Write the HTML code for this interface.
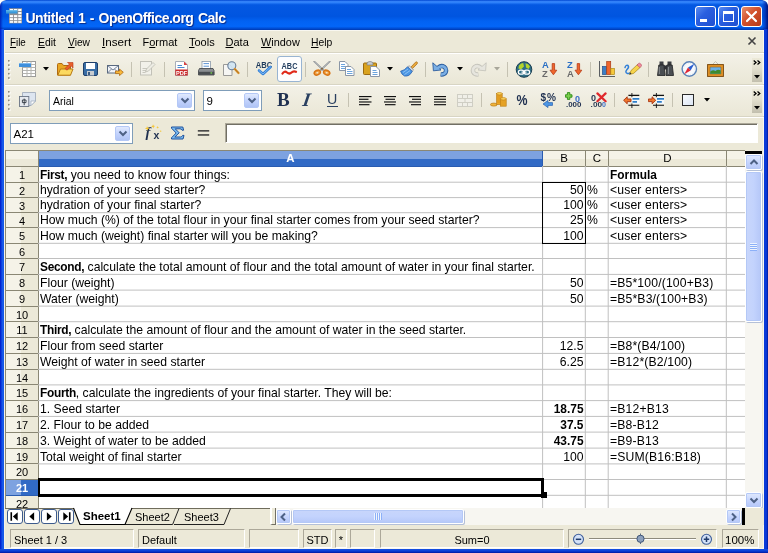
<!DOCTYPE html>
<html><head><meta charset="utf-8"><title>Untitled 1 - OpenOffice.org Calc</title>
<style>
html,body{margin:0;padding:0;background:#fff;}
#w{position:relative;width:768px;height:553px;overflow:hidden;border-radius:6px 6px 0 0;will-change:transform;background:#ECE9D8;font-family:"Liberation Sans",sans-serif;font-size:11px;color:#000;}
#w div,#w span,#w svg{position:absolute;box-sizing:border-box;}
#w b{font-weight:bold;}
.t{white-space:nowrap;line-height:1;}
.m{top:36px;font-size:11px;white-space:nowrap;line-height:13px;}
.m u{text-decoration:underline;}
.sep{width:1px;background:#C5C2B2;}
.c{font-size:12.2px;white-space:nowrap;line-height:14px;height:14px;}
.c b{font-size:11.9px;letter-spacing:-0.3px;}
.c.n b{font-size:11.9px;letter-spacing:0;}
.rh{left:6px;width:33px;font-size:11.5px;text-align:center;line-height:14px;background:#ECE9D8;border-bottom:1px solid #8A8774;border-right:1px solid #8A8774;padding-right:0px;font-size:11px;}
.hl{background:#C0C0C0;height:1px;left:38px;width:707px;}
.vl{background:#C0C0C0;width:1px;top:166px;height:342px;}
.ch{top:151px;height:16px;font-size:11.5px;text-align:center;line-height:15px;background:linear-gradient(#F5F3E8 0%,#F5F3E8 50%,#ECE9D8 50%);border-right:1px solid #8A8774;border-bottom:1px solid #8A8774;}
.st{top:529px;height:19px;border:1px solid;border-color:#ACA899 #fff #fff #ACA899;font-size:11px;line-height:20px;white-space:nowrap;}
.combo{background:#fff;border:1px solid #7F9DB9;}
.dd{background:linear-gradient(#E1EAFE,#C3D3FD 50%,#B0C4F5);border:1px solid #B4C8F6;border-radius:2px;}
.sbtn{background:linear-gradient(#E1EAFE,#C3D3FD 60%,#B5C7F8);border:1px solid #fff;border-radius:2px;box-shadow:0 0 0 1px #B4C8F6 inset,1px 1px 0 #B4C0D8;}
</style></head><body>
<div id="w">

<div style="left:0;top:0;width:768px;height:30px;background:linear-gradient(#0046D2 0%,#3C8CFF 6%,#2478F6 10%,#0458E2 16%,#0055E0 55%,#0262F2 70%,#0366F8 88%,#0050D8 94%,#0038B0 100%);border-radius:6px 6px 0 0;"></div>
<div style="left:762px;top:0;width:6px;height:30px;border-radius:0 6px 0 0;background:linear-gradient(90deg,rgba(0,20,140,0) 0%,rgba(0,20,140,0.55) 60%,rgba(0,10,110,0.9) 100%);"></div>
<div style="left:0;top:0;width:3px;height:30px;border-radius:6px 0 0 0;background:linear-gradient(90deg,rgba(0,20,170,0.8) 0%,rgba(0,20,170,0) 100%);"></div>
<div class="t" style="left:25.5px;top:11px;font-size:14px;font-weight:bold;color:#fff;text-shadow:1px 1px 1px #0A2A88;letter-spacing:-0.5px;word-spacing:1.1px;" id="title">Untitled 1 - OpenOffice.org Calc</div>
<svg style="left:6px;top:8px" width="17" height="16" viewBox="0 0 17 16"><rect x="3" y="0.2" width="13" height="15.2" fill="#8E9094"/><g fill="#fff"><rect x="3.8" y="1" width="3.3" height="2"/><rect x="8" y="1" width="3.3" height="2"/><rect x="12.2" y="1" width="3.2" height="2"/><rect x="12.2" y="4" width="3.2" height="2.1"/><rect x="3.8" y="7.1" width="3.3" height="2.1"/><rect x="8" y="7.1" width="3.3" height="2.1"/><rect x="12.2" y="7.1" width="3.2" height="2.1"/><rect x="3.8" y="10.1" width="3.3" height="2.1"/><rect x="8" y="10.1" width="3.3" height="2.1"/><rect x="12.2" y="10.1" width="3.2" height="2.1"/><rect x="3.8" y="13.1" width="3.3" height="1.7"/><rect x="8" y="13.1" width="3.3" height="1.7"/><rect x="12.2" y="13.1" width="3.2" height="1.7"/></g><rect x="0" y="2.3" width="11.4" height="3.2" fill="#3A9ADC"/><rect x="0" y="2.3" width="11.4" height="1" fill="#6CC0EE"/></svg>
<div style="left:695px;top:6px;width:21px;height:21px;border:1px solid #fff;border-radius:3px;background:linear-gradient(135deg,#5A8CF0 0%,#2A5FE0 40%,#1F4FD0 100%);"></div><div style="left:700px;top:19px;width:7px;height:3px;background:#fff;"></div>
<div style="left:718px;top:6px;width:21px;height:21px;border:1px solid #fff;border-radius:3px;background:linear-gradient(135deg,#5A8CF0 0%,#2A5FE0 40%,#1F4FD0 100%);"></div><div style="left:723px;top:11px;width:11px;height:11px;border:1px solid #fff;border-top:3px solid #fff;"></div>
<div style="left:741px;top:6px;width:21px;height:21px;border:1px solid #fff;border-radius:3px;background:linear-gradient(135deg,#E8906C 0%,#D2502C 45%,#B83A18 100%);"></div><svg style="left:741px;top:6px" width="21" height="21" viewBox="0 0 21 21"><path d="M6 6L15 15M15 6L6 15" stroke="#fff" stroke-width="2.2" stroke-linecap="round"/></svg>
<div style="left:0;top:30px;width:768px;height:1px;background:#F8F7F0;"></div>
<div style="left:0;top:29px;width:4px;height:524px;background:linear-gradient(90deg,#0016C8 0,#0838DC 30%,#1A5EEC 70%,#1254E4 100%);"></div>
<div style="left:764px;top:29px;width:4px;height:524px;background:linear-gradient(90deg,#0A3CD8 0,#0838D8 60%,#00189A 100%);"></div>
<div style="left:0;top:549px;width:768px;height:4px;background:linear-gradient(#1650E0 0,#0A40D8 50%,#0018A0 100%);"></div>
<div style="left:4px;top:30px;width:1px;height:519px;background:#F4F2E8;"></div>
<div style="left:763px;top:30px;width:1px;height:519px;background:#F8F7F0;"></div>
<div style="left:4px;top:548px;width:760px;height:1px;background:#F8F7F0;"></div>
<div class="m" style="left:10px;transform:scaleX(0.89);transform-origin:0 0;"><u>F</u>ile</div>
<div class="m" style="left:38px;transform:scaleX(0.94);transform-origin:0 0;"><u>E</u>dit</div>
<div class="m" style="left:68px;transform:scaleX(0.93);transform-origin:0 0;"><u>V</u>iew</div>
<div class="m" style="left:102px;transform:scaleX(1.06);transform-origin:0 0;"><u>I</u>nsert</div>
<div class="m" style="left:142.5px;transform:scaleX(1);transform-origin:0 0;">F<u>o</u>rmat</div>
<div class="m" style="left:189px;transform:scaleX(1);transform-origin:0 0;"><u>T</u>ools</div>
<div class="m" style="left:225.5px;transform:scaleX(1);transform-origin:0 0;"><u>D</u>ata</div>
<div class="m" style="left:260.5px;transform:scaleX(0.99);transform-origin:0 0;"><u>W</u>indow</div>
<div class="m" style="left:310.5px;transform:scaleX(0.94);transform-origin:0 0;"><u>H</u>elp</div>
<svg style="left:747px;top:36px" width="10" height="10" viewBox="0 0 10 10"><path d="M1.5 1.5L8.5 8.5M8.5 1.5L1.5 8.5" stroke="#444" stroke-width="1.6"/></svg>
<div style="left:5px;top:53px;width:759px;height:1px;background:#fff;"></div>
<div style="left:5px;top:52px;width:759px;height:1px;background:#D8D5C4;"></div>
<div style="left:5px;top:84px;width:759px;height:1px;background:#D8D5C4;"></div>
<div style="left:5px;top:85px;width:759px;height:1px;background:#fff;"></div>
<div style="left:5px;top:116px;width:759px;height:1px;background:#D8D5C4;"></div>
<div style="left:5px;top:117px;width:759px;height:1px;background:#fff;"></div>
<div style="left:5px;top:54px;width:758px;height:30px;background:linear-gradient(#F3F1E7,#EAE7D6);"></div>
<div style="left:5px;top:86px;width:758px;height:30px;background:linear-gradient(#F3F1E7,#EAE7D6);"></div>
<svg style="left:8px;top:60px" width="4" height="23.5" viewBox="0 0 4 23.5"><rect x="1" y="1" width="1.6" height="1.6" fill="#fff"/><rect x="0" y="0" width="1.6" height="1.6" fill="#8D8A7C"/><rect x="1" y="5.3" width="1.6" height="1.6" fill="#fff"/><rect x="0" y="4.3" width="1.6" height="1.6" fill="#8D8A7C"/><rect x="1" y="9.6" width="1.6" height="1.6" fill="#fff"/><rect x="0" y="8.6" width="1.6" height="1.6" fill="#8D8A7C"/><rect x="1" y="13.9" width="1.6" height="1.6" fill="#fff"/><rect x="0" y="12.9" width="1.6" height="1.6" fill="#8D8A7C"/><rect x="1" y="18.2" width="1.6" height="1.6" fill="#fff"/><rect x="0" y="17.2" width="1.6" height="1.6" fill="#8D8A7C"/></svg>
<svg style="left:19px;top:61px" width="17" height="16" viewBox="0 0 17 16"><rect x="3.5" y="0.5" width="13" height="15" fill="#fff" stroke="#9A9A98"/><path d="M3.5 3.5h13M3.5 6.5h13M3.5 9.5h13M3.5 12.5h13M8 0.5v15M12 0.5v15" stroke="#B4B4B0"/><rect x="0" y="2" width="12" height="4" fill="#3F8FDC"/><rect x="0" y="2" width="12" height="1" fill="#7DB8EE"/></svg>
<svg style="left:43px;top:67px" width="6" height="4" viewBox="0 0 6 4"><path d="M0 0H6L3 3.5z" fill="#000"/></svg>
<svg style="left:57px;top:61px" width="17" height="15" viewBox="0 0 17 15"><path d="M0.5 14V3.5Q0.5 2.5 1.5 2.5H5L6.5 4.5H13.5V14z" fill="#E9A824" stroke="#B06A10"/><path d="M0.8 14.2L3.5 8H16L13.5 14.2z" fill="#FBD960" stroke="#B97A14"/><path d="M8 7.5L12.5 3L10.5 1.5H16V7L14.3 5L10 9.2z" fill="#E8602C" stroke="#B8381A" stroke-width="0.6"/></svg>
<svg style="left:83px;top:62px" width="15" height="14" viewBox="0 0 15 14"><rect x="0.5" y="0.5" width="14" height="13" rx="1.5" fill="#3A6EA5" stroke="#1F3F6A"/><rect x="3" y="1" width="9" height="6" fill="#fff"/><rect x="4" y="9" width="7" height="4.5" fill="#C8CCD0"/><rect x="5" y="10" width="2" height="3" fill="#3A5A80"/></svg>
<svg style="left:107px;top:65px" width="17" height="11" viewBox="0 0 17 11"><rect x="0.5" y="0.5" width="11" height="7.5" fill="#F4F6FA" stroke="#5A6A80"/><path d="M0.5 0.5L6 5L11.5 0.5M0.5 8L4.5 4M11.5 8L7.5 4" stroke="#5A6A80" fill="none" stroke-width="0.8"/><path d="M8.5 6H12.5V4L16.3 7.3L12.5 10.6V8.6H8.5z" fill="#F8B83C" stroke="#B06A10" stroke-width="0.8"/></svg>
<div class="sep" style="left:131px;top:62px;height:15px;"></div>
<svg style="left:140px;top:61px" width="16" height="15" viewBox="0 0 16 15"><rect x="0.5" y="0.5" width="11" height="13.5" fill="#F2F1EA" stroke="#C2C1B8"/><path d="M2.5 7.5h5M2.5 9.5h4M2.5 11.5h3" stroke="#C8C7BE"/><path d="M5.5 11L6.5 8L13 1.5L15 3.5L8.5 10z" fill="#EDECE4" stroke="#BDBCB2" stroke-width="0.8"/></svg>
<div class="sep" style="left:164px;top:62px;height:15px;"></div>
<svg style="left:175px;top:61px" width="13" height="15" viewBox="0 0 13 15"><path d="M0.5 0.5H9L12.5 4V14.5H0.5z" fill="#fff" stroke="#A8AEB8"/><path d="M9 0.5V4H12.5z" fill="#D84040"/><path d="M2.5 4.5H7M2.5 6.5H9.5" stroke="#4A88D0" stroke-width="1"/><rect x="0.3" y="8.5" width="12.4" height="6" fill="#CC2B2B"/><text x="6.5" y="13.6" font-family="Liberation Sans,sans-serif" font-weight="bold" font-size="5.6" fill="#fff" text-anchor="middle">PDF</text></svg>
<svg style="left:198px;top:61px" width="17" height="15" viewBox="0 0 17 15"><rect x="4" y="0.5" width="8.5" height="8" fill="#fff" stroke="#8A98AA" stroke-width="0.8"/><path d="M5.5 2.6h5.5M5.5 5.2h5.5" stroke="#4A88D0" stroke-width="0.9"/><path d="M1.5 7.5h13.5l1 2v4.5h-15.5v-4.5z" fill="#8A8E92" stroke="#3A3E42" stroke-width="0.8"/><rect x="0.7" y="10.8" width="15.6" height="3" fill="#4A4E52"/><rect x="12.5" y="11.3" width="1.6" height="1.3" fill="#7ADC50"/></svg>
<svg style="left:223px;top:61px" width="17" height="15" viewBox="0 0 17 15"><path d="M0.5 3.5H6.5L9 6V14.5H0.5z" fill="#F6F6F4" stroke="#9A9A98"/><circle cx="8.8" cy="4.8" r="4" fill="#CFE4F4" fill-opacity="0.9" stroke="#6A7E96" stroke-width="1.1"/><path d="M11.8 8L15.5 12" stroke="#D8902C" stroke-width="2.2" stroke-linecap="round"/><path d="M11.8 8L15.5 12" stroke="#8A5A14" stroke-width="0.5"/></svg>
<div class="sep" style="left:247px;top:62px;height:15px;"></div>
<svg style="left:255px;top:60px" width="18" height="17" viewBox="0 0 18 17"><text x="9" y="7.8" font-family="Liberation Sans,sans-serif" font-weight="bold" font-size="9.6" fill="#1E3A5C" text-anchor="middle" textLength="16.4" lengthAdjust="spacingAndGlyphs">ABC</text><path d="M4 10.5L8 14L15.5 7" stroke="#2F7FD8" stroke-width="2.6" fill="none" stroke-linecap="round" stroke-linejoin="round"/><path d="M4 10.5L8 14L15.5 7" stroke="#8CC0F4" stroke-width="0.9" fill="none" stroke-linecap="round" stroke-linejoin="round"/></svg>
<div style="left:277px;top:56px;width:25px;height:26px;background:#FDFDFE;border:1px solid #98B4D2;border-radius:3px;"></div>
<svg style="left:281px;top:61px" width="17" height="15" viewBox="0 0 17 15"><text x="8.5" y="7.8" font-family="Liberation Sans,sans-serif" font-weight="bold" font-size="9.2" fill="#1E3A5C" text-anchor="middle" textLength="15.8" lengthAdjust="spacingAndGlyphs">ABC</text><path d="M1.5 12.5Q3.5 9.5 6 11.5T10.5 11.5T15 10.8" stroke="#E02818" stroke-width="2.2" fill="none" stroke-linecap="round"/></svg>
<div class="sep" style="left:305px;top:62px;height:15px;"></div>
<svg style="left:313px;top:61px" width="18" height="15" viewBox="0 0 18 15"><path d="M1.2 0.5L11.6 10.4M16.8 0.5L6.4 10.4" stroke="#8A8E92" stroke-width="1.7" stroke-linecap="round"/><path d="M1.2 0.5L11.6 10.4M16.8 0.5L6.4 10.4" stroke="#D8DCE0" stroke-width="0.5"/><ellipse cx="4.3" cy="11.6" rx="3.2" ry="2.3" transform="rotate(-25 4.3 11.6)" fill="#F0A040" stroke="#D87414" stroke-width="1.5"/><ellipse cx="13.7" cy="11.6" rx="3.2" ry="2.3" transform="rotate(25 13.7 11.6)" fill="#F0A040" stroke="#D87414" stroke-width="1.5"/><ellipse cx="4.3" cy="11.7" rx="1.1" ry="0.8" fill="#F4E8D0"/><ellipse cx="13.7" cy="11.7" rx="1.1" ry="0.8" fill="#F4E8D0"/><circle cx="9" cy="7.8" r="0.9" fill="#6A4A1A"/></svg>
<svg style="left:339px;top:61px" width="16" height="15" viewBox="0 0 16 15"><path d="M0.5 0.5H6L9 3.5V9.5H0.5z" fill="#fff" stroke="#8A96A6"/><path d="M2 3.5h4M2 5.5h5.5M2 7.5h5.5" stroke="#5A98D8" stroke-width="0.9"/><path d="M6.5 5.5H12L15 8.5V14.5H6.5z" fill="#fff" stroke="#8A96A6"/><path d="M8 8.5h4M8 10.5h5.5M8 12.5h5.5" stroke="#5A98D8" stroke-width="0.9"/></svg>
<svg style="left:363px;top:61px" width="17" height="16" viewBox="0 0 17 16"><rect x="0.5" y="2" width="13" height="11.5" rx="1" fill="#D9A21E" stroke="#9A6A10"/><path d="M4 2.8Q4 0.5 7 0.5T10 2.8V4H4z" fill="#C8CCD0" stroke="#7A8088" stroke-width="0.7"/><path d="M7.5 5.5H13L16.5 9V15.5H7.5z" fill="#fff" stroke="#8A96A6"/><path d="M9.5 9.5h4M9.5 11.5h5M9.5 13.5h5" stroke="#5A98D8" stroke-width="0.9"/></svg>
<svg style="left:387px;top:67px" width="6" height="4" viewBox="0 0 6 4"><path d="M0 0H6L3 3.5z" fill="#000"/></svg>
<svg style="left:400px;top:61px" width="18" height="16" viewBox="0 0 18 16"><path d="M11 6L15.5 1.2Q16.5 0.4 17.2 1.2T17 3L12.6 7.5z" fill="#E8A83C" stroke="#A86A14" stroke-width="0.7"/><path d="M9.2 4.6L13.6 9L12 10.4L7.8 6z" fill="#D8DCE2" stroke="#7A8088" stroke-width="0.6"/><path d="M7.6 5.8L12.2 10.4Q9.5 15.8 4.5 15Q1.5 13.5 0.6 10.2Q4.5 9.5 7.6 5.8z" fill="#4C96E4" stroke="#2A62B0" stroke-width="0.8"/><path d="M3 11.5L8 8M4.5 13.5L10 9.6" stroke="#9CCBF6" stroke-width="0.8"/></svg>
<div class="sep" style="left:425px;top:62px;height:15px;"></div>
<svg style="left:432px;top:61.5px" width="18" height="15" viewBox="0 0 18 15"><path d="M6.2 5.6Q9.2 3 12.2 4.8Q15 7 13.6 10.4Q12.2 12.8 8.6 12.4" stroke="#2C5E9E" stroke-width="4.4" fill="none"/><path d="M0.8 0.8L1.4 8.8L9 8z" fill="#7AAEE4" stroke="#2C5E9E" stroke-width="0.9" stroke-linejoin="round"/><path d="M5.2 6.4Q9.2 3 12.2 4.8Q15 7 13.6 10.4Q12.2 12.8 9 12.4" stroke="#7AAEE4" stroke-width="2.6" fill="none"/></svg>
<svg style="left:457px;top:67px" width="6" height="4" viewBox="0 0 6 4"><path d="M0 0H6L3 3.5z" fill="#000"/></svg>
<svg style="left:469px;top:61.5px" width="18" height="15" viewBox="0 0 18 15"><path d="M11.8 5.6Q8.8 3 5.8 4.8Q3 7 4.4 10.4Q5.8 12.8 9.4 12.4" stroke="#C6C5BC" stroke-width="4.4" fill="none"/><path d="M17.2 0.8L16.6 8.8L9 8z" fill="#E6E5DE" stroke="#C6C5BC" stroke-width="0.9" stroke-linejoin="round"/><path d="M12.8 6.4Q8.8 3 5.8 4.8Q3 7 4.4 10.4Q5.8 12.8 9 12.4" stroke="#E6E5DE" stroke-width="2.6" fill="none"/></svg>
<svg style="left:494px;top:67px" width="6" height="4" viewBox="0 0 6 4"><path d="M0 0H6L3 3.5z" fill="#A8A69A"/></svg>
<div class="sep" style="left:507px;top:62px;height:15px;"></div>
<svg style="left:515px;top:60.5px" width="18" height="17" viewBox="0 0 18 17"><circle cx="9" cy="8.5" r="7.8" fill="#2E6E86" stroke="#1C3E50" stroke-width="1"/><path d="M4 4.5Q6 1.8 8.2 2L9 5.5L6.2 8.2L3.4 7.6zM10.5 2.2Q13.5 2.6 15 5.5L13.5 8L11 6.6z" fill="#B4D42C"/><rect x="3.4" y="9.2" width="5.4" height="4" rx="2" fill="none" stroke="#fff" stroke-width="1.3"/><rect x="9.2" y="9.2" width="5.4" height="4" rx="2" fill="none" stroke="#fff" stroke-width="1.3"/><path d="M6.5 11.2h5" stroke="#fff" stroke-width="1.3"/></svg>
<svg style="left:541.5px;top:61px" width="16" height="16" viewBox="0 0 16 16"><text x="0" y="6.8" font-family="Liberation Sans,sans-serif" font-weight="bold" font-size="9.4" fill="#2A6FC4">A</text><text x="0" y="15.6" font-family="Liberation Sans,sans-serif" font-weight="bold" font-size="9.4" fill="#6A6A6A">Z</text><path d="M10.2 2.6h2.4v6.6h2.2L11.4 13.8L8 9.2h2.2z" fill="#F0662C" stroke="#B83A14" stroke-width="0.8"/></svg>
<svg style="left:567px;top:61px" width="16" height="16" viewBox="0 0 16 16"><text x="0" y="6.8" font-family="Liberation Sans,sans-serif" font-weight="bold" font-size="9.4" fill="#2A6FC4">Z</text><text x="0" y="15.6" font-family="Liberation Sans,sans-serif" font-weight="bold" font-size="9.4" fill="#6A6A6A">A</text><path d="M10.2 2.6h2.4v6.6h2.2L11.4 13.8L8 9.2h2.2z" fill="#F0662C" stroke="#B83A14" stroke-width="0.8"/></svg>
<div class="sep" style="left:590px;top:62px;height:15px;"></div>
<svg style="left:599px;top:61px" width="17" height="16" viewBox="0 0 17 16"><path d="M0.5 0V15.5H16" stroke="#5A5E62" fill="none"/><rect x="3.5" y="5.5" width="4" height="8" fill="#3E7EC4" stroke="#1E4E8A" stroke-width="0.7"/><rect x="7.7" y="0.6" width="4" height="12.9" fill="#F0662C" stroke="#A83A14" stroke-width="0.7"/><rect x="11.8" y="7.5" width="3.6" height="6" fill="#F6C83C" stroke="#B08A14" stroke-width="0.7"/></svg>
<svg style="left:624px;top:62px" width="18" height="14" viewBox="0 0 18 14"><path d="M1 5.5Q2 2.5 4 3.5Q5.5 5 3 7.5Q0.5 10.5 3.5 11.5Q5 11.6 6 10.8" stroke="#2F7FD8" stroke-width="1.5" fill="none" stroke-linecap="round"/><path d="M5.5 12.5L7 8.6L13.6 2.4L16.4 5.2L9.6 11.4z" fill="#F6D44C" stroke="#A8841C" stroke-width="0.7"/><path d="M13 3L14.6 1.4Q15.6 0.8 16.6 1.8T17.6 3.8L16 5.6z" fill="#F08CA0" stroke="#B84A5E" stroke-width="0.6"/><path d="M5.5 12.5L6.2 10.6L7.6 11.8z" fill="#333"/></svg>
<div class="sep" style="left:648px;top:62px;height:15px;"></div>
<svg style="left:657px;top:61px" width="17" height="15" viewBox="0 0 17 15"><rect x="2.5" y="0.5" width="4" height="4" fill="#3A3C40"/><rect x="10.5" y="0.5" width="4" height="4" fill="#3A3C40"/><path d="M1.8 4H7.2L8 14.5H0.5z" fill="#4A4E52" stroke="#1E2022" stroke-width="0.8"/><path d="M9.8 4H15.2L16.5 14.5H9z" fill="#4A4E52" stroke="#1E2022" stroke-width="0.8"/><rect x="6.8" y="4.5" width="3.4" height="4" fill="#2E3034"/><path d="M2.3 6v7M11.4 6v7" stroke="#8A8E92" stroke-width="1"/></svg>
<svg style="left:681px;top:60.5px" width="17" height="17" viewBox="0 0 17 17"><circle cx="8.3" cy="8" r="7.2" fill="#F8FAFC" stroke="#5A82B8" stroke-width="1.4"/><circle cx="8.3" cy="8" r="5.6" fill="none" stroke="#C8D4E4" stroke-width="0.6" stroke-dasharray="0.8 1.4"/><path d="M13.4 2.8L9.6 9.4L7 6.6z" fill="#2A5FD0"/><path d="M3.2 13.2L7 6.6L9.6 9.4z" fill="#E02838"/></svg>
<svg style="left:707px;top:60px" width="17" height="17" viewBox="0 0 17 17"><path d="M5.5 4.5L8.5 1.5L11.5 4.5" stroke="#B8B6AA" fill="none" stroke-width="0.8"/><rect x="0.6" y="4.6" width="15.8" height="11.8" fill="#E8982A" stroke="#7A4A10" stroke-width="1"/><rect x="3" y="7" width="11" height="7" fill="#6AB0E8" stroke="#8A5A14" stroke-width="0.6"/><path d="M3.3 11.5Q6 9.5 8.5 11Q11 9 13.7 10.5V13.7H3.3z" fill="#3E8A2E"/></svg>
<div style="left:752px;top:58px;width:10px;height:24px;background:linear-gradient(#ECE9D8 0%,#E4E1D0 40%,#C2BFAE 100%);"></div>
<svg style="left:753px;top:59.5px" width="8" height="5" viewBox="0 0 8 5"><path d="M0.7 0.5L3 2.5L0.7 4.5M4.5 0.5L6.8 2.5L4.5 4.5" stroke="#000" stroke-width="1.3" fill="none"/></svg>
<svg style="left:754px;top:75px" width="6" height="4" viewBox="0 0 6 4"><path d="M0 0H6L3 3.5z" fill="#000"/></svg>
<svg style="left:8px;top:91px" width="4" height="23.5" viewBox="0 0 4 23.5"><rect x="1" y="1" width="1.6" height="1.6" fill="#fff"/><rect x="0" y="0" width="1.6" height="1.6" fill="#8D8A7C"/><rect x="1" y="5.3" width="1.6" height="1.6" fill="#fff"/><rect x="0" y="4.3" width="1.6" height="1.6" fill="#8D8A7C"/><rect x="1" y="9.6" width="1.6" height="1.6" fill="#fff"/><rect x="0" y="8.6" width="1.6" height="1.6" fill="#8D8A7C"/><rect x="1" y="13.9" width="1.6" height="1.6" fill="#fff"/><rect x="0" y="12.9" width="1.6" height="1.6" fill="#8D8A7C"/><rect x="1" y="18.2" width="1.6" height="1.6" fill="#fff"/><rect x="0" y="17.2" width="1.6" height="1.6" fill="#8D8A7C"/></svg>
<svg style="left:19px;top:92px" width="18" height="15" viewBox="0 0 18 15"><path d="M3.5 0.5H16.5V9L12 13.5H3.5z" fill="#DDE5F0" stroke="#9AA6B8" stroke-width="0.8"/><path d="M16.5 9H12V13.5z" fill="#fff" stroke="#9AA6B8" stroke-width="0.7"/><rect x="0.5" y="4.5" width="9.3" height="10" fill="#E6E9EE" stroke="#6A7484" stroke-width="0.9"/><path d="M5.2 6.6v6.6M3.4 8h3.6v2.6H3.4z" stroke="#2E3640" stroke-width="0.9" fill="#fff"/></svg>
<div class="combo" style="left:49px;top:90px;width:146px;height:21px;"></div>
<div class="t" style="left:53px;top:96px;font-size:11.5px;transform:scaleX(0.91);transform-origin:0 0;" id="fn">Arial</div>
<div class="dd" style="left:177px;top:93px;width:15px;height:15px;"></div>
<svg style="left:179.5px;top:97px" width="10" height="8" viewBox="0 0 10 8"><path d="M1.5 1.5L5 5L8.5 1.5" stroke="#4D6185" stroke-width="2" fill="none"/></svg>
<div class="combo" style="left:203px;top:90px;width:59px;height:21px;"></div>
<div class="t" style="left:206.5px;top:96px;font-size:11.5px;">9</div>
<div class="dd" style="left:244px;top:93px;width:15px;height:15px;"></div>
<svg style="left:246.5px;top:97px" width="10" height="8" viewBox="0 0 10 8"><path d="M1.5 1.5L5 5L8.5 1.5" stroke="#4D6185" stroke-width="2" fill="none"/></svg>
<div class="t" style="left:277px;top:89.5px;font-family:'Liberation Serif',serif;font-weight:bold;font-size:19px;color:#1F3050;">B</div>
<div class="t" style="left:303px;top:89.5px;font-family:'Liberation Serif',serif;font-style:italic;font-weight:bold;font-size:19px;color:#2A4060;transform:skewX(-9deg);">I</div>
<div class="t" style="left:327px;top:91px;font-family:'Liberation Sans',sans-serif;font-size:15px;color:#2A4060;transform:scaleX(0.95);transform-origin:0 0;">U</div>
<div style="left:327px;top:105.5px;width:11px;height:1px;background:#2A4060;"></div>
<div class="sep" style="left:348px;top:93px;height:14px;"></div>
<svg style="left:359px;top:96px" width="12.5" height="10" viewBox="0 0 12.5 10"><rect x="0" y="0" width="12.5" height="1.15" fill="#111"/><rect x="0" y="2.7" width="9.5" height="1.15" fill="#111"/><rect x="0" y="5.4" width="12.5" height="1.15" fill="#111"/><rect x="0" y="8.1" width="10.5" height="1.15" fill="#111"/></svg>
<svg style="left:383.8px;top:96px" width="12.5" height="10" viewBox="0 0 12.5 10"><rect x="0" y="0" width="12.5" height="1.15" fill="#111"/><rect x="1.5" y="2.7" width="9.5" height="1.15" fill="#111"/><rect x="0" y="5.4" width="12.5" height="1.15" fill="#111"/><rect x="1" y="8.1" width="10.5" height="1.15" fill="#111"/></svg>
<svg style="left:408.5px;top:96px" width="12.5" height="10" viewBox="0 0 12.5 10"><rect x="0" y="0" width="12.5" height="1.15" fill="#111"/><rect x="3" y="2.7" width="9.5" height="1.15" fill="#111"/><rect x="0" y="5.4" width="12.5" height="1.15" fill="#111"/><rect x="2" y="8.1" width="10.5" height="1.15" fill="#111"/></svg>
<svg style="left:433.8px;top:96px" width="12.5" height="10" viewBox="0 0 12.5 10"><rect x="0" y="0" width="12.5" height="1.15" fill="#111"/><rect x="0" y="2.7" width="12.5" height="1.15" fill="#111"/><rect x="0" y="5.4" width="12.5" height="1.15" fill="#111"/><rect x="0" y="8.1" width="12.5" height="1.15" fill="#111"/></svg>
<svg style="left:457px;top:94px" width="16" height="13" viewBox="0 0 16 13"><rect x="0.5" y="0.5" width="15" height="12" fill="#F0EFE8" stroke="#CFCEC4"/><path d="M0.5 4.5h15M0.5 8.5h15M5.5 0.5v4M10.5 0.5v4M5.5 8.5v4M10.5 8.5v4M8 4.5v4" stroke="#CFCEC4"/></svg>
<div class="sep" style="left:481px;top:93px;height:14px;"></div>
<svg style="left:490px;top:92px" width="17" height="15" viewBox="0 0 17 15"><ellipse cx="3.8" cy="12.6" rx="3.4" ry="1.5" fill="#F0B43C" stroke="#B87A14" stroke-width="0.7"/><rect x="6.6" y="1.5" width="5.6" height="11" fill="#EFA724" stroke="#B87A14" stroke-width="0.6"/><ellipse cx="9.4" cy="1.7" rx="2.8" ry="1.2" fill="#FAD25C" stroke="#B87A14" stroke-width="0.6"/><path d="M6.6 4h5.6M6.6 6h5.6M6.6 8h5.6M6.6 10h5.6" stroke="#C8861A" stroke-width="0.6"/><rect x="10.4" y="6.8" width="5.8" height="7.4" fill="#F2AE2C" stroke="#B87A14" stroke-width="0.6"/><ellipse cx="13.3" cy="6.8" rx="2.9" ry="1.2" fill="#FAD25C" stroke="#B87A14" stroke-width="0.6"/><path d="M10.4 9h5.8M10.4 11h5.8M10.4 13h5.8" stroke="#C8861A" stroke-width="0.6"/></svg>
<svg style="left:516px;top:93px" width="13" height="14" viewBox="0 0 13 14"><text x="0.6" y="12" font-family="Liberation Sans,sans-serif" font-weight="bold" font-size="14" fill="#1F3050" textLength="11" lengthAdjust="spacingAndGlyphs">%</text></svg>
<svg style="left:540px;top:91.5px" width="17" height="16" viewBox="0 0 17 16"><text x="0.5" y="8.6" font-family="Liberation Sans,sans-serif" font-weight="bold" font-size="10.6" fill="#1F3050" textLength="5.6" lengthAdjust="spacingAndGlyphs">$</text><text x="7" y="8.6" font-family="Liberation Sans,sans-serif" font-weight="bold" font-size="10.6" fill="#1F3050" textLength="9" lengthAdjust="spacingAndGlyphs">%</text><path d="M12.5 10.6H8V8.4L3 12L8 15.6V13.4H12.5z" fill="#4C96E4" stroke="#2A62B0" stroke-width="0.7"/></svg>
<svg style="left:564.5px;top:91.5px" width="17" height="16" viewBox="0 0 17 16"><path d="M2.4 0.6h2.4v2.2h2.2v2.4H4.8v2.2H2.4V5.2H0.4V2.8h2z" fill="#7CD04C" stroke="#2A8A14" stroke-width="0.9"/><text x="10" y="9.8" font-family="Liberation Sans,sans-serif" font-weight="bold" font-size="9" fill="#3A6EC8">0</text><text x="1" y="15.4" font-family="Liberation Sans,sans-serif" font-weight="bold" font-size="7" fill="#1F3050" textLength="15.4" lengthAdjust="spacingAndGlyphs">.000</text></svg>
<svg style="left:589.5px;top:91.5px" width="17" height="16" viewBox="0 0 17 16"><text x="1" y="8.6" font-family="Liberation Sans,sans-serif" font-weight="bold" font-size="9" fill="#2A3A54">0</text><path d="M7.4 1.4L15.6 9.2M15.6 1.4L7.4 9.2" stroke="#E0282C" stroke-width="2.2" stroke-linecap="round"/><text x="0.6" y="15.4" font-family="Liberation Sans,sans-serif" font-weight="bold" font-size="7" fill="#2A3A54" textLength="11.5" lengthAdjust="spacingAndGlyphs">.00</text><text x="12" y="15.4" font-family="Liberation Sans,sans-serif" font-weight="bold" font-size="7" fill="#3A6EC8">0</text></svg>
<div class="sep" style="left:614px;top:93px;height:14px;"></div>
<svg style="left:622.5px;top:93px" width="17" height="15" viewBox="0 0 17 15"><rect x="9" y="4" width="7.6" height="7" fill="#F4F8FC"/><path d="M5.4 2.4H16.3M5.4 12.3H16.3" stroke="#111" stroke-width="1.1"/><path d="M8.9 0V4.2M8.9 10.5V15" stroke="#111" stroke-width="0.9"/><path d="M9.5 5.8H16.3M9.5 8.9H14" stroke="#2F7FC8" stroke-width="1.7"/><path d="M0.6 7.3L4.2 3.8V6H8v2.6H4.2v2.2z" fill="#F0762C" stroke="#A8320E" stroke-width="0.9" stroke-linejoin="round"/></svg>
<svg style="left:648px;top:93px" width="17" height="15" viewBox="0 0 17 15"><rect x="8.6" y="4" width="7.6" height="7" fill="#F4F8FC"/><path d="M5 2.4H16M5 12.3H16" stroke="#111" stroke-width="1.1"/><path d="M8.4 0V4.2M8.4 10.5V15" stroke="#111" stroke-width="0.9"/><path d="M9 5.8H16M9 8.9H13.8" stroke="#2F7FC8" stroke-width="1.7"/><path d="M7.7 7.3L4.1 3.8V6H0.4v2.6H4.1v2.2z" fill="#F0762C" stroke="#A8320E" stroke-width="0.9" stroke-linejoin="round"/></svg>
<div class="sep" style="left:672px;top:93px;height:14px;"></div>
<div style="left:682px;top:94px;width:12px;height:12px;border:1px solid #2A2A2A;background:linear-gradient(135deg,#F8FAFE,#DCE6F4);"></div>
<svg style="left:704px;top:98px" width="6" height="4" viewBox="0 0 6 4"><path d="M0 0H6L3 3.5z" fill="#000"/></svg>
<div style="left:752px;top:89px;width:10px;height:24px;background:linear-gradient(#ECE9D8 0%,#E4E1D0 40%,#C2BFAE 100%);"></div>
<svg style="left:753px;top:90.5px" width="8" height="5" viewBox="0 0 8 5"><path d="M0.7 0.5L3 2.5L0.7 4.5M4.5 0.5L6.8 2.5L4.5 4.5" stroke="#000" stroke-width="1.3" fill="none"/></svg>
<svg style="left:754px;top:106px" width="6" height="4" viewBox="0 0 6 4"><path d="M0 0H6L3 3.5z" fill="#000"/></svg>
<div class="combo" style="left:10px;top:123px;width:123px;height:21px;"></div>
<div class="t" style="left:13.5px;top:129px;font-size:11.5px;">A21</div>
<div class="dd" style="left:115px;top:126px;width:15px;height:15px;"></div>
<svg style="left:117.5px;top:130px" width="10" height="8" viewBox="0 0 10 8"><path d="M1.5 1.5L5 5L8.5 1.5" stroke="#4D6185" stroke-width="2" fill="none"/></svg>
<div style="left:225px;top:123px;width:533px;height:20px;background:#fff;border:1px solid #ACA899;border-right-color:#fff;border-bottom-color:#fff;box-shadow:inset 1px 1px 0 #716F64;"></div>
<svg style="left:144px;top:124px" width="18" height="18" viewBox="0 0 18 18"><text x="1.6" y="13.2" font-family="Liberation Serif,serif" font-style="italic" font-weight="bold" font-size="14.5" fill="#1F3050">f</text><text x="9.6" y="14.8" font-family="Liberation Sans,sans-serif" font-weight="bold" font-size="10.5" fill="#1F3050">x</text><path d="M3 2l.9 1.8l1.9.4l-1.8.8l-.5 1.9l-.8-1.8l-1.9-.5l1.8-.8zM9 0.3l.7 1.5l1.6.3l-1.5.7l-.4 1.6l-.7-1.5l-1.6-.4l1.5-.7zM13.5 2l.5 1l1.1.2l-1 .5l-.3 1.1l-.5-1l-1.1-.3l1-.5zM16.5 6l.4.8l.9.2l-.8.4l-.2.9l-.4-.8l-.9-.2l.8-.4z" fill="#F4C430"/></svg>
<svg style="left:170px;top:126px" width="15" height="14" viewBox="0 0 15 14"><path d="M1.5 1H12.8L13.6 4.2H12Q11.6 2.8 10 2.8H5.2L9.2 6.8L4.8 11H10.4Q12 11 12.6 9.4H14L13 13H1.5V11.8L6.2 7L1.5 2.2z" fill="#7CC0F4" stroke="#1E4E9A" stroke-width="1" stroke-linejoin="round"/></svg>
<svg style="left:197px;top:129px" width="13" height="8" viewBox="0 0 13 8"><rect x="0.8" y="1.1" width="11.4" height="1.5" fill="#3A3A3A"/><rect x="0.8" y="5.2" width="11.4" height="1.5" fill="#3A3A3A"/></svg>
<div style="left:5px;top:150px;width:740px;height:358px;background:#fff;"></div>
<div style="left:5px;top:150px;width:740px;height:1px;background:#8A8774;"></div>
<div style="left:5px;top:150px;width:1px;height:358px;background:#8A8774;"></div>
<div class="ch" style="left:6px;width:33px;"></div>
<div class="ch" style="left:39px;width:504px;background:linear-gradient(#7DA2E0 0%,#7DA2E0 50%,#316AC5 50%,#316AC5 100%);color:#fff;font-weight:bold;border-color:#2A5CB0;">A</div>
<div class="ch" style="left:543px;width:43px;">B</div>
<div class="ch" style="left:586px;width:23px;">C</div>
<div class="ch" style="left:609px;width:118px;">D</div>
<div class="ch" style="left:727px;width:18px;border-right:0;"></div>
<div class="rh" style="top:167px;height:16px;line-height:17px;background:linear-gradient(90deg,#F5F3E8 0%,#F5F3E8 46%,#ECE9D8 46%);">1</div>
<div class="rh" style="top:183px;height:15px;line-height:16px;background:linear-gradient(90deg,#F5F3E8 0%,#F5F3E8 46%,#ECE9D8 46%);">2</div>
<div class="rh" style="top:198px;height:15px;line-height:16px;background:linear-gradient(90deg,#F5F3E8 0%,#F5F3E8 46%,#ECE9D8 46%);">3</div>
<div class="rh" style="top:213px;height:15px;line-height:16px;background:linear-gradient(90deg,#F5F3E8 0%,#F5F3E8 46%,#ECE9D8 46%);">4</div>
<div class="rh" style="top:228px;height:16px;line-height:17px;background:linear-gradient(90deg,#F5F3E8 0%,#F5F3E8 46%,#ECE9D8 46%);">5</div>
<div class="rh" style="top:244px;height:15px;line-height:16px;background:linear-gradient(90deg,#F5F3E8 0%,#F5F3E8 46%,#ECE9D8 46%);">6</div>
<div class="rh" style="top:259px;height:16px;line-height:17px;background:linear-gradient(90deg,#F5F3E8 0%,#F5F3E8 46%,#ECE9D8 46%);">7</div>
<div class="rh" style="top:275px;height:16px;line-height:17px;background:linear-gradient(90deg,#F5F3E8 0%,#F5F3E8 46%,#ECE9D8 46%);">8</div>
<div class="rh" style="top:291px;height:16px;line-height:17px;background:linear-gradient(90deg,#F5F3E8 0%,#F5F3E8 46%,#ECE9D8 46%);">9</div>
<div class="rh" style="top:307px;height:15px;line-height:16px;background:linear-gradient(90deg,#F5F3E8 0%,#F5F3E8 46%,#ECE9D8 46%);">10</div>
<div class="rh" style="top:322px;height:16px;line-height:17px;background:linear-gradient(90deg,#F5F3E8 0%,#F5F3E8 46%,#ECE9D8 46%);">11</div>
<div class="rh" style="top:338px;height:16px;line-height:17px;background:linear-gradient(90deg,#F5F3E8 0%,#F5F3E8 46%,#ECE9D8 46%);">12</div>
<div class="rh" style="top:354px;height:16px;line-height:17px;background:linear-gradient(90deg,#F5F3E8 0%,#F5F3E8 46%,#ECE9D8 46%);">13</div>
<div class="rh" style="top:370px;height:15px;line-height:16px;background:linear-gradient(90deg,#F5F3E8 0%,#F5F3E8 46%,#ECE9D8 46%);">14</div>
<div class="rh" style="top:385px;height:16px;line-height:17px;background:linear-gradient(90deg,#F5F3E8 0%,#F5F3E8 46%,#ECE9D8 46%);">15</div>
<div class="rh" style="top:401px;height:16px;line-height:17px;background:linear-gradient(90deg,#F5F3E8 0%,#F5F3E8 46%,#ECE9D8 46%);">16</div>
<div class="rh" style="top:417px;height:16px;line-height:17px;background:linear-gradient(90deg,#F5F3E8 0%,#F5F3E8 46%,#ECE9D8 46%);">17</div>
<div class="rh" style="top:433px;height:16px;line-height:17px;background:linear-gradient(90deg,#F5F3E8 0%,#F5F3E8 46%,#ECE9D8 46%);">18</div>
<div class="rh" style="top:449px;height:15px;line-height:16px;background:linear-gradient(90deg,#F5F3E8 0%,#F5F3E8 46%,#ECE9D8 46%);">19</div>
<div class="rh" style="top:464px;height:16px;line-height:17px;background:linear-gradient(90deg,#F5F3E8 0%,#F5F3E8 46%,#ECE9D8 46%);">20</div>
<div class="rh" style="top:480px;height:16px;line-height:17px;background:linear-gradient(90deg,#7DA2E0 0%,#7DA2E0 46%,#316AC5 46%,#316AC5 100%);color:#fff;font-weight:bold;border-color:#2A5CB0;">21</div>
<div class="rh" style="top:496px;height:12px;line-height:17px;background:linear-gradient(90deg,#F5F3E8 0%,#F5F3E8 46%,#ECE9D8 46%);border-bottom:0;">22</div>
<svg style="left:0;top:0" width="768" height="553" viewBox="0 0 768 553"><path d="M38 182.2H745" stroke="#C0C0C0" stroke-width="1"/><path d="M38 197.6H745" stroke="#C0C0C0" stroke-width="1"/><path d="M38 212.7H745" stroke="#C0C0C0" stroke-width="1"/><path d="M38 227.6H745" stroke="#C0C0C0" stroke-width="1"/><path d="M38 243.3H745" stroke="#C0C0C0" stroke-width="1"/><path d="M38 258.5H745" stroke="#C0C0C0" stroke-width="1"/><path d="M38 274.4H745" stroke="#C0C0C0" stroke-width="1"/><path d="M38 290.1H745" stroke="#C0C0C0" stroke-width="1"/><path d="M38 306.1H745" stroke="#C0C0C0" stroke-width="1"/><path d="M38 321.7H745" stroke="#C0C0C0" stroke-width="1"/><path d="M38 337.5H745" stroke="#C0C0C0" stroke-width="1"/><path d="M38 353.4H745" stroke="#C0C0C0" stroke-width="1"/><path d="M38 369.3H745" stroke="#C0C0C0" stroke-width="1"/><path d="M38 384.9H745" stroke="#C0C0C0" stroke-width="1"/><path d="M38 400.6H745" stroke="#C0C0C0" stroke-width="1"/><path d="M38 416.4H745" stroke="#C0C0C0" stroke-width="1"/><path d="M38 432.1H745" stroke="#C0C0C0" stroke-width="1"/><path d="M38 448.1H745" stroke="#C0C0C0" stroke-width="1"/><path d="M38 463.9H745" stroke="#C0C0C0" stroke-width="1"/><path d="M38 479.5H745" stroke="#C0C0C0" stroke-width="1"/><path d="M38 495.3H745" stroke="#C0C0C0" stroke-width="1"/><path d="M542.6 166V508" stroke="#C0C0C0" stroke-width="1"/><path d="M585.3 166V508" stroke="#C0C0C0" stroke-width="1"/><path d="M608.2 166V508" stroke="#C0C0C0" stroke-width="1"/><path d="M726.3 166V508" stroke="#C0C0C0" stroke-width="1"/></svg>
<div class="c" style="left:40px;top:0;transform:translateY(167.9px);"><b>First,</b> you need to know four things:</div>
<div class="c n" style="left:610px;letter-spacing:0.15px;top:0;transform:translateY(167.9px);"><b>Formula</b></div>
<div class="c" style="left:40px;top:0;transform:translateY(183.3px);">hydration of your seed starter?</div>
<div class="c n" style="left:543px;width:40.5px;text-align:right;top:0;transform:translateY(183.3px);">50</div>
<div class="c" style="left:587px;top:0;transform:translateY(183.3px);">%</div>
<div class="c n" style="left:610px;letter-spacing:0.15px;top:0;transform:translateY(183.3px);">&lt;user enters&gt;</div>
<div class="c" style="left:40px;top:0;transform:translateY(198.4px);">hydration of your final starter?</div>
<div class="c n" style="left:543px;width:40.5px;text-align:right;top:0;transform:translateY(198.4px);">100</div>
<div class="c" style="left:587px;top:0;transform:translateY(198.4px);">%</div>
<div class="c n" style="left:610px;letter-spacing:0.15px;top:0;transform:translateY(198.4px);">&lt;user enters&gt;</div>
<div class="c" style="left:40px;top:0;transform:translateY(213.3px);">How much (%) of the total flour in your final starter comes from your seed starter?</div>
<div class="c n" style="left:543px;width:40.5px;text-align:right;top:0;transform:translateY(213.3px);">25</div>
<div class="c" style="left:587px;top:0;transform:translateY(213.3px);">%</div>
<div class="c n" style="left:610px;letter-spacing:0.15px;top:0;transform:translateY(213.3px);">&lt;user enters&gt;</div>
<div class="c" style="left:40px;top:0;transform:translateY(229px);">How much (weight) final starter will you be making?</div>
<div class="c n" style="left:543px;width:40.5px;text-align:right;top:0;transform:translateY(229px);">100</div>
<div class="c n" style="left:610px;letter-spacing:0.15px;top:0;transform:translateY(229px);">&lt;user enters&gt;</div>
<div class="c" style="left:40px;top:0;transform:translateY(260.1px);"><b>Second,</b> calculate the total amount of flour and the total amount of water in your final starter.</div>
<div class="c" style="left:40px;top:0;transform:translateY(275.8px);">Flour (weight)</div>
<div class="c n" style="left:543px;width:40.5px;text-align:right;top:0;transform:translateY(275.8px);">50</div>
<div class="c n" style="left:610px;letter-spacing:0.15px;top:0;transform:translateY(275.8px);">=B5*100/(100+B3)</div>
<div class="c" style="left:40px;top:0;transform:translateY(291.8px);">Water (weight)</div>
<div class="c n" style="left:543px;width:40.5px;text-align:right;top:0;transform:translateY(291.8px);">50</div>
<div class="c n" style="left:610px;letter-spacing:0.15px;top:0;transform:translateY(291.8px);">=B5*B3/(100+B3)</div>
<div class="c" style="left:40px;top:0;transform:translateY(323.2px);"><b>Third,</b> calculate the amount of flour and the amount of water in the seed starter.</div>
<div class="c" style="left:40px;top:0;transform:translateY(339.1px);">Flour from seed starter</div>
<div class="c n" style="left:543px;width:40.5px;text-align:right;top:0;transform:translateY(339.1px);">12.5</div>
<div class="c n" style="left:610px;letter-spacing:0.15px;top:0;transform:translateY(339.1px);">=B8*(B4/100)</div>
<div class="c" style="left:40px;top:0;transform:translateY(355px);">Weight of water in seed starter</div>
<div class="c n" style="left:543px;width:40.5px;text-align:right;top:0;transform:translateY(355px);">6.25</div>
<div class="c n" style="left:610px;letter-spacing:0.15px;top:0;transform:translateY(355px);">=B12*(B2/100)</div>
<div class="c" style="left:40px;top:0;transform:translateY(386.3px);"><b>Fourth</b>, calculate the ingredients of your final starter. They will be:</div>
<div class="c" style="left:40px;top:0;transform:translateY(402.1px);">1. Seed starter</div>
<div class="c n" style="left:543px;width:40.5px;text-align:right;top:0;transform:translateY(402.1px);"><b>18.75</b></div>
<div class="c n" style="left:610px;letter-spacing:0.15px;top:0;transform:translateY(402.1px);">=B12+B13</div>
<div class="c" style="left:40px;top:0;transform:translateY(417.8px);">2. Flour to be added</div>
<div class="c n" style="left:543px;width:40.5px;text-align:right;top:0;transform:translateY(417.8px);"><b>37.5</b></div>
<div class="c n" style="left:610px;letter-spacing:0.15px;top:0;transform:translateY(417.8px);">=B8-B12</div>
<div class="c" style="left:40px;top:0;transform:translateY(433.8px);">3. Weight of water to be added</div>
<div class="c n" style="left:543px;width:40.5px;text-align:right;top:0;transform:translateY(433.8px);"><b>43.75</b></div>
<div class="c n" style="left:610px;letter-spacing:0.15px;top:0;transform:translateY(433.8px);">=B9-B13</div>
<div class="c" style="left:40px;top:0;transform:translateY(449.6px);">Total weight of final starter</div>
<div class="c n" style="left:543px;width:40.5px;text-align:right;top:0;transform:translateY(449.6px);">100</div>
<div class="c n" style="left:610px;letter-spacing:0.15px;top:0;transform:translateY(449.6px);">=SUM(B16:B18)</div>
<div style="left:542px;top:182px;width:44px;height:62px;border:1px solid #000;"></div>
<div style="left:38px;top:478px;width:506px;height:19px;border:3px solid #000;border-left-width:2px;"></div>
<div style="left:541px;top:492px;width:6px;height:6px;background:#000;"></div>
<div style="left:745px;top:151px;width:17px;height:357px;background:#F7F6F1;"></div>
<div style="left:745px;top:151px;width:17px;height:3px;background:#000;"></div>
<div class="sbtn" style="left:745px;top:154px;width:17px;height:16px;"></div>
<svg style="left:749px;top:158px" width="10" height="8" viewBox="0 0 10 8"><path d="M1.5 6L5 2.5L8.5 6" stroke="#4D6185" stroke-width="2" fill="none"/></svg>
<div class="sbtn" style="left:745px;top:171px;width:17px;height:151px;background:linear-gradient(90deg,#C8D6FB,#C3D3FD 50%,#B5C7F8);"></div>
<div style="left:750px;top:243px;width:7px;height:8px;background:repeating-linear-gradient(#EEF4FE 0,#EEF4FE 1px,#8CB0F8 1px,#8CB0F8 2px);"></div>
<div class="sbtn" style="left:745px;top:492px;width:17px;height:16px;"></div>
<svg style="left:749px;top:497px" width="10" height="8" viewBox="0 0 10 8"><path d="M1.5 1.5L5 5L8.5 1.5" stroke="#4D6185" stroke-width="2" fill="none"/></svg>
<div style="left:5px;top:508px;width:759px;height:17px;background:#ECE9D8;"></div>
<div style="left:7px;top:509px;width:16px;height:15px;border:1px solid #3C5A8C;border-radius:3px;background:#fff;"></div>
<svg style="left:7px;top:509px" width="16" height="15" viewBox="0 0 15 14"><path d="M4 3v8" stroke="#000" stroke-width="1.5"/><path d="M10 3L5.5 7L10 11z" fill="#000"/></svg>
<div style="left:24px;top:509px;width:16px;height:15px;border:1px solid #3C5A8C;border-radius:3px;background:#fff;"></div>
<svg style="left:24px;top:509px" width="16" height="15" viewBox="0 0 15 14"><path d="M9.5 3L5 7L9.5 11z" fill="#000"/></svg>
<div style="left:41px;top:509px;width:16px;height:15px;border:1px solid #3C5A8C;border-radius:3px;background:#fff;"></div>
<svg style="left:41px;top:509px" width="16" height="15" viewBox="0 0 15 14"><path d="M5.5 3L10 7L5.5 11z" fill="#000"/></svg>
<div style="left:58px;top:509px;width:16px;height:15px;border:1px solid #3C5A8C;border-radius:3px;background:#fff;"></div>
<svg style="left:58px;top:509px" width="16" height="15" viewBox="0 0 15 14"><path d="M11 3v8" stroke="#000" stroke-width="1.5"/><path d="M5 3L9.5 7L5 11z" fill="#000"/></svg>
<div style="left:5px;top:508px;width:266px;height:1px;background:#6F6C5C;"></div>
<svg style="left:70px;top:507px" width="210" height="18" viewBox="0 0 210 18"><path d="M55 17.5H102.6L109 1.5M104 17.5H154L160.5 1.5" fill="none" stroke="#222" stroke-width="1"/><path d="M3.5 1L10 17.5H55L62 1" fill="#fff" stroke="#000" stroke-width="1.1"/></svg>
<div class="t" style="left:83px;top:511px;font-size:11.5px;font-weight:bold;">Sheet1</div>
<div class="t" style="left:135px;top:511.5px;font-size:11px;">Sheet2</div>
<div class="t" style="left:184px;top:511.5px;font-size:11px;">Sheet3</div>
<div style="left:270px;top:508px;width:6px;height:17px;background:#ECE9D8;border-left:2px solid #fff;border-right:1px solid #716F64;border-bottom:1px solid #716F64;"></div>
<div style="left:276px;top:508px;width:466px;height:17px;background:#F7F6F1;"></div>
<div class="sbtn" style="left:276px;top:509px;width:15px;height:15px;"></div>
<svg style="left:279px;top:511.5px" width="8" height="10" viewBox="0 0 8 10"><path d="M6 1.5L2.5 5L6 8.5" stroke="#4D6185" stroke-width="2" fill="none"/></svg>
<div class="sbtn" style="left:292px;top:509px;width:172px;height:15px;background:linear-gradient(#C8D6FB,#C3D3FD 50%,#B5C7F8);"></div>
<div style="left:374px;top:513px;width:8px;height:7px;background:repeating-linear-gradient(90deg,#EEF4FE 0,#EEF4FE 1px,#8CB0F8 1px,#8CB0F8 2px);"></div>
<div class="sbtn" style="left:726px;top:509px;width:15px;height:15px;"></div>
<svg style="left:730px;top:511.5px" width="8" height="10" viewBox="0 0 8 10"><path d="M2 1.5L5.5 5L2 8.5" stroke="#4D6185" stroke-width="2" fill="none"/></svg>
<div style="left:742px;top:508px;width:3px;height:17px;background:#000;"></div>
<div class="st" style="left:10px;width:124px;padding-left:3px;">Sheet 1 / 3</div>
<div class="st" style="left:138px;width:107px;padding-left:3px;">Default</div>
<div class="st" style="left:249px;width:50px;padding-left:3px;"></div>
<div class="st" style="left:303px;width:29px;text-align:center;">STD</div>
<div class="st" style="left:335px;width:12px;text-align:center;">*</div>
<div class="st" style="left:350px;width:25px;padding-left:3px;"></div>
<div class="st" style="left:380px;width:184px;text-align:center;">Sum=0</div>
<div class="st" style="left:568px;width:149px;padding-left:3px;"></div>
<div class="st" style="left:722px;width:37px;padding-left:2px;font-size:11.5px;">100%</div>
<svg style="left:568px;top:529px" width="149" height="19" viewBox="0 0 149 19"><path d="M21 9.5H128" stroke="#8D8A7C"/><path d="M21 10.5H128" stroke="#fff"/><circle cx="10.5" cy="10.3" r="5" fill="#D4E2F8" stroke="#3F5F9A" stroke-width="1.1"/><path d="M7.8 10.3h5.4" stroke="#1F3A6A" stroke-width="1.5"/><circle cx="138.5" cy="10.3" r="5" fill="#D4E2F8" stroke="#3F5F9A" stroke-width="1.1"/><path d="M135.8 10.3h5.4M138.5 7.6v5.4" stroke="#1F3A6A" stroke-width="1.5"/><path d="M72.5 4.5V15" stroke="#5A6A80" stroke-width="1"/><circle cx="72.5" cy="9.8" r="3.6" fill="#8CA0BC" stroke="#3F5577"/></svg>
</div></body></html>
